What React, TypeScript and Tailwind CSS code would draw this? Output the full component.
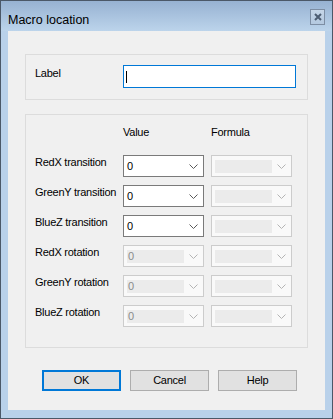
const font = { fontFamily: '"Liberation Sans", Arial, sans-serif' };

const Chevron = ({ disabled }: { disabled?: boolean }) => (
  <svg width="9" height="5" viewBox="0 0 9 5" className="shrink-0">
    <polyline
      points="0.5,0.5 4.5,4.5 8.5,0.5"
      fill="none"
      stroke={disabled ? "#b4b4b4" : "#5a5a5a"}
      strokeWidth="1"
    />
  </svg>
);

const Combo = ({ value, disabled }: { value?: string; disabled?: boolean }) => {
  if (!disabled) {
    return (
      <div className="flex h-[22px] w-[81px] items-center justify-between border border-[#7a7a7a] bg-white pl-[3px] pr-[5px]">
        <span className="text-[11px] leading-none text-black">{value}</span>
        <Chevron />
      </div>
    );
  }
  return (
    <div className="flex h-[22px] w-[81px] items-center justify-between border border-[#cccccc] bg-[#f9f9f9] pl-[3px] pr-[5px]">
      <div className="flex h-[13px] w-[57px] items-center bg-[#ebebeb] pl-[1px]">
        <span className="text-[11px] leading-none text-[#8a8a8a]">{value}</span>
      </div>
      <Chevron disabled />
    </div>
  );
};

const rows = [
  { label: "RedX transition", value: "0", disabled: false },
  { label: "GreenY transition", value: "0", disabled: false },
  { label: "BlueZ transition", value: "0", disabled: false },
  { label: "RedX rotation", value: "0", disabled: true },
  { label: "GreenY rotation", value: "0", disabled: true },
  { label: "BlueZ rotation", value: "0", disabled: true },
];

const DialogButton = ({ label, primary }: { label: string; primary?: boolean }) => (
  <button
    type="button"
    className={
      primary
        ? "flex h-[21px] w-[79px] items-center justify-center border-2 border-[#0078d7] bg-[#e1e1e1] text-[11px] text-black"
        : "flex h-[21px] w-[79px] items-center justify-center border border-[#adadad] bg-[#e1e1e1] text-[11px] text-black"
    }
  >
    {label}
  </button>
);

export default function App() {
  return (
    <div
      style={font}
      className="flex h-[419px] w-[333px] flex-col border border-[#4b5868] bg-[#b9d1ea] tracking-[-0.25px]"
    >
      <div className="flex h-[30px] shrink-0 items-start justify-between bg-gradient-to-b from-[#97b2d2] to-[#bcd4eb] pl-[7px] pr-[7px]">
        <span className="mt-[12px] text-[12.5px] leading-[14px] tracking-normal text-black">Macro location</span>
        <div className="mt-[8px] flex h-[16px] w-[15px] items-center justify-center border border-[#7d8ea4] bg-gradient-to-b from-[#c6d6e8] to-[#b4c9e0]">
          <svg width="8" height="8" viewBox="0 0 8 8">
            <path d="M1 1 L7 7 M7 1 L1 7" stroke="#4d5d72" strokeWidth="2" />
          </svg>
        </div>
      </div>

      <div className="mx-[7px] mb-[8px] flex flex-1 flex-col bg-[#f0f0f0] px-[17px] pt-[23px]">
        <div className="flex h-[46px] items-start border border-[#dcdcdc] pl-[9px] pt-[10px]">
          <span className="w-[88px] pt-[2px] text-[11px] leading-[13px] text-black">Label</span>
          <div className="flex h-[23px] w-[173px] items-center border border-[#0078d7] bg-white pl-[2px]">
            <span className="h-[12px] w-[1px] bg-black" />
          </div>
        </div>

        <div className="mt-[14px] flex h-[234px] flex-col border border-[#dcdcdc] pl-[9px] pt-[11px]">
          <div className="mb-[16px] flex h-[13px] text-[11px] leading-[13px] text-black">
            <span className="w-[88px]" />
            <span className="w-[88px]">Value</span>
            <span>Formula</span>
          </div>
          <div className="flex flex-col gap-[8px]">
            {rows.map((row) => (
              <div key={row.label} className="flex items-start">
                <span className="w-[88px] pt-[1px] text-[11px] leading-[13px] text-black">{row.label}</span>
                <Combo value={row.value} disabled={row.disabled} />
                <div className="w-[7px]" />
                <Combo disabled />
              </div>
            ))}
          </div>
        </div>

        <div className="mt-[22px] flex gap-[9px] pl-[17px]">
          <DialogButton label="OK" primary />
          <DialogButton label="Cancel" />
          <DialogButton label="Help" />
        </div>
      </div>
    </div>
  );
}
